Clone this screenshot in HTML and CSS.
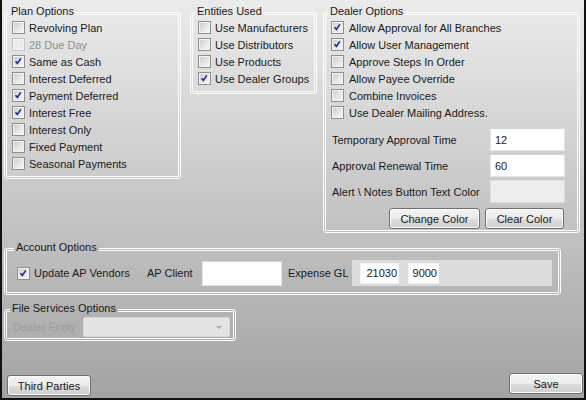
FILE: index.html
```html
<!DOCTYPE html>
<html>
<head>
<meta charset="utf-8">
<link rel="stylesheet" href="styles.css">
</head>
<body>
<div class="window">
  <div class="top">
    <fieldset class="group plan">
      <legend>Plan Options</legend>
      <div class="rows">
        <label class="row"><span class="cb"></span>Revolving Plan</label>
        <label class="row disabled"><span class="cb"></span>28 Due Day</label>
        <label class="row"><span class="cb"><svg viewBox="0 0 13 13"><path d="M3 6.2 L5.2 8.8 L9.2 2.8"/></svg></span>Same as Cash</label>
        <label class="row"><span class="cb"></span>Interest Deferred</label>
        <label class="row"><span class="cb"><svg viewBox="0 0 13 13"><path d="M3 6.2 L5.2 8.8 L9.2 2.8"/></svg></span>Payment Deferred</label>
        <label class="row"><span class="cb"><svg viewBox="0 0 13 13"><path d="M3 6.2 L5.2 8.8 L9.2 2.8"/></svg></span>Interest Free</label>
        <label class="row"><span class="cb"></span>Interest Only</label>
        <label class="row"><span class="cb"></span>Fixed Payment</label>
        <label class="row"><span class="cb"></span>Seasonal Payments</label>
      </div>
    </fieldset>
    <fieldset class="group entities">
      <legend>Entities Used</legend>
      <div class="rows">
        <label class="row"><span class="cb"></span>Use Manufacturers</label>
        <label class="row"><span class="cb"></span>Use Distributors</label>
        <label class="row"><span class="cb"></span>Use Products</label>
        <label class="row"><span class="cb"><svg viewBox="0 0 13 13"><path d="M3 6.2 L5.2 8.8 L9.2 2.8"/></svg></span>Use Dealer Groups</label>
      </div>
    </fieldset>
    <fieldset class="group dealer">
      <legend>Dealer Options</legend>
      <div class="rows">
        <label class="row wide"><span class="cb"><svg viewBox="0 0 13 13"><path d="M3 6.2 L5.2 8.8 L9.2 2.8"/></svg></span>Allow Approval for All Branches</label>
        <label class="row wide"><span class="cb"><svg viewBox="0 0 13 13"><path d="M3 6.2 L5.2 8.8 L9.2 2.8"/></svg></span>Allow User Management</label>
        <label class="row wide"><span class="cb"></span>Approve Steps In Order</label>
        <label class="row wide"><span class="cb"></span>Allow Payee Override</label>
        <label class="row wide"><span class="cb"></span>Combine Invoices</label>
        <label class="row wide"><span class="cb"></span>Use Dealer Mailing Address.</label>
      </div>
      <div class="fields">
        <span class="flabel">Temporary Approval Time</span>
        <input class="tb" value="12">
        <span class="flabel">Approval Renewal Time</span>
        <input class="tb" value="60">
        <span class="flabel">Alert \ Notes Button Text Color</span>
        <input class="tb off" disabled>
      </div>
      <div class="btnrow">
        <button class="btn change">Change Color</button>
        <button class="btn clear">Clear Color</button>
      </div>
    </fieldset>
  </div>

  <fieldset class="group account">
    <legend>Account Options</legend>
    <div class="acct-row">
      <label class="row vendors"><span class="cb"><svg viewBox="0 0 13 13"><path d="M3 6.2 L5.2 8.8 L9.2 2.8"/></svg></span>Update AP Vendors</label>
      <span class="aplabel">AP Client</span>
      <input class="tb apclient">
      <span class="gllabel">Expense GL</span>
      <div class="glpanel">
        <input class="tb gl1" value="21030">
        <input class="tb gl2" value="9000">
      </div>
    </div>
  </fieldset>

  <fieldset class="group files">
    <legend>File Services Options</legend>
    <div class="files-row">
      <span class="delabel">Dealer Entity</span>
      <div class="combo"><span class="arrow"></span></div>
    </div>
  </fieldset>

  <div class="footer">
    <button class="btn third">Third Parties</button>
    <button class="btn save">Save</button>
  </div>
</div>
</body>
</html>
```
FILE: styles.css
```css
html, body {
  margin: 0;
  padding: 0;
}
body {
  width: 586px;
  height: 400px;
  font-family: "Liberation Sans", Arial, sans-serif;
  font-size: 11px;
  color: #1a1a1a;
}
.window {
  box-sizing: border-box;
  width: 586px;
  height: 400px;
  border-left: 2px solid #111;
  border-right: 2px solid #111;
  border-bottom: 2px solid #111;
  background: linear-gradient(#ebebeb, #a3a3a3);
  display: flex;
  flex-direction: column;
  padding-top: 5px;
}
.top {
  display: flex;
  align-items: flex-start;
  padding-left: 2px;
}
.group {
  box-sizing: border-box;
  margin: 0;
  min-width: 0;
  border: 3px double #fdfdfd;
  border-radius: 3px;
  padding: 0 4px 4px 5px;
}
.group legend {
  padding: 0 2px 4px;
  margin-left: -3px;
  line-height: 13px;
  font-size: 11px;
}
.rows {
  margin-top: -3px;
}
.row {
  display: flex;
  align-items: center;
  height: 17px;
  gap: 4px;
  white-space: nowrap;
}
.row.wide { gap: 5px; }
.row.disabled { color: #8f8f8f; }
.cb {
  box-sizing: border-box;
  width: 13px;
  height: 13px;
  flex: none;
  border: 1px solid #8e8f8f;
  background: linear-gradient(135deg, #c9c9c9 0%, #e6e6e6 55%, #f8f8f8 100%);
  box-shadow: inset 0 0 0 1px #f3f3f3;
  display: flex;
}
.row.disabled .cb {
  border-color: #c4c4c4;
  background: #ececec;
  box-shadow: inset 0 0 0 1px #f4f4f4;
}
.cb svg {
  width: 11px;
  height: 11px;
}
.cb svg path {
  fill: none;
  stroke: #24249a;
  stroke-width: 1.9;
}
.plan { width: 177px; }
.entities { width: 127px; margin-left: 9px; }
.dealer { width: 257px; margin-left: 6px; padding: 0 12px 1px 5px; }

.fields {
  display: grid;
  grid-template-columns: 1fr 75px;
  grid-auto-rows: 23px;
  row-gap: 3px;
  align-items: center;
  margin-top: 7px;
}
.flabel { padding-left: 1px; white-space: nowrap; }
.tb {
  box-sizing: border-box;
  height: 23px;
  width: 75px;
  margin: 0;
  border: 1px solid #e2e5e9;
  border-top-color: #d2d4d8;
  background: #fff;
  font-family: "Liberation Sans", Arial, sans-serif;
  font-size: 11px;
  color: #1a1a1a;
  padding: 0 4px;
  outline: none;
}
.tb.off {
  background: #ededed;
  border-color: #dedede;
}
.btnrow {
  display: flex;
  justify-content: flex-end;
  gap: 5px;
  margin-top: 5px;
  margin-right: 1px;
}
.btn {
  box-sizing: border-box;
  height: 21px;
  margin: 0;
  padding: 0;
  border: 1px solid #707070;
  border-radius: 3px;
  background: linear-gradient(#f3f3f3 0%, #ebebeb 50%, #dddddd 51%, #cfcfcf 100%);
  box-shadow: inset 0 0 0 1px #fafafa;
  font-family: "Liberation Sans", Arial, sans-serif;
  font-size: 11px;
  color: #1a1a1a;
}
.change { width: 91px; }
.clear { width: 79px; }

.account {
  width: 557px;
  margin-top: 8px;
  margin-left: 2px;
  padding: 0 6px 6px 10px;
}
.acct-row {
  display: flex;
  align-items: center;
  margin-top: 2px;
  height: 26px;
}
.vendors { gap: 4px; width: 130px; }
.aplabel { margin-left: 0; width: 55px; white-space: nowrap; }
.apclient { width: 80px; height: 25px; }
.gllabel { margin-left: 6px; width: 64px; white-space: nowrap; }
.glpanel {
  display: flex;
  align-items: center;
  gap: 9px;
  width: 200px;
  height: 26px;
  box-sizing: border-box;
  padding-left: 8px;
  background: #dcdcdc;
}
.gl1, .gl2 {
  height: 21px;
  text-align: right;
  padding: 0 1px 0 0;
  border-color: #f4f4f4;
}
.gl1 { width: 39px; }
.gl2 { width: 31px; }

.files {
  width: 232px;
  margin-top: 7px;
  margin-left: 2px;
  padding: 0 3px 1px 6px;
}
.files-row {
  display: flex;
  align-items: center;
  margin-top: -2px;
  height: 20px;
}
.delabel { width: 70px; color: #9c9c9c; white-space: nowrap; }
.combo {
  box-sizing: border-box;
  width: 147px;
  height: 20px;
  border: 1px solid #d6d6d6;
  border-radius: 2px;
  background: #e4e4e4;
  display: flex;
  align-items: center;
  justify-content: flex-end;
  padding-right: 7px;
}
.arrow {
  width: 0;
  height: 0;
  border-left: 3px solid transparent;
  border-right: 3px solid transparent;
  border-top: 3px solid #a8a8a8;
}
.footer {
  margin-top: auto;
  display: flex;
  justify-content: space-between;
  align-items: flex-end;
  padding: 0 1px 2px 5px;
}
.third { width: 84px; }
.save { width: 74px; margin-bottom: 2px; }
```
